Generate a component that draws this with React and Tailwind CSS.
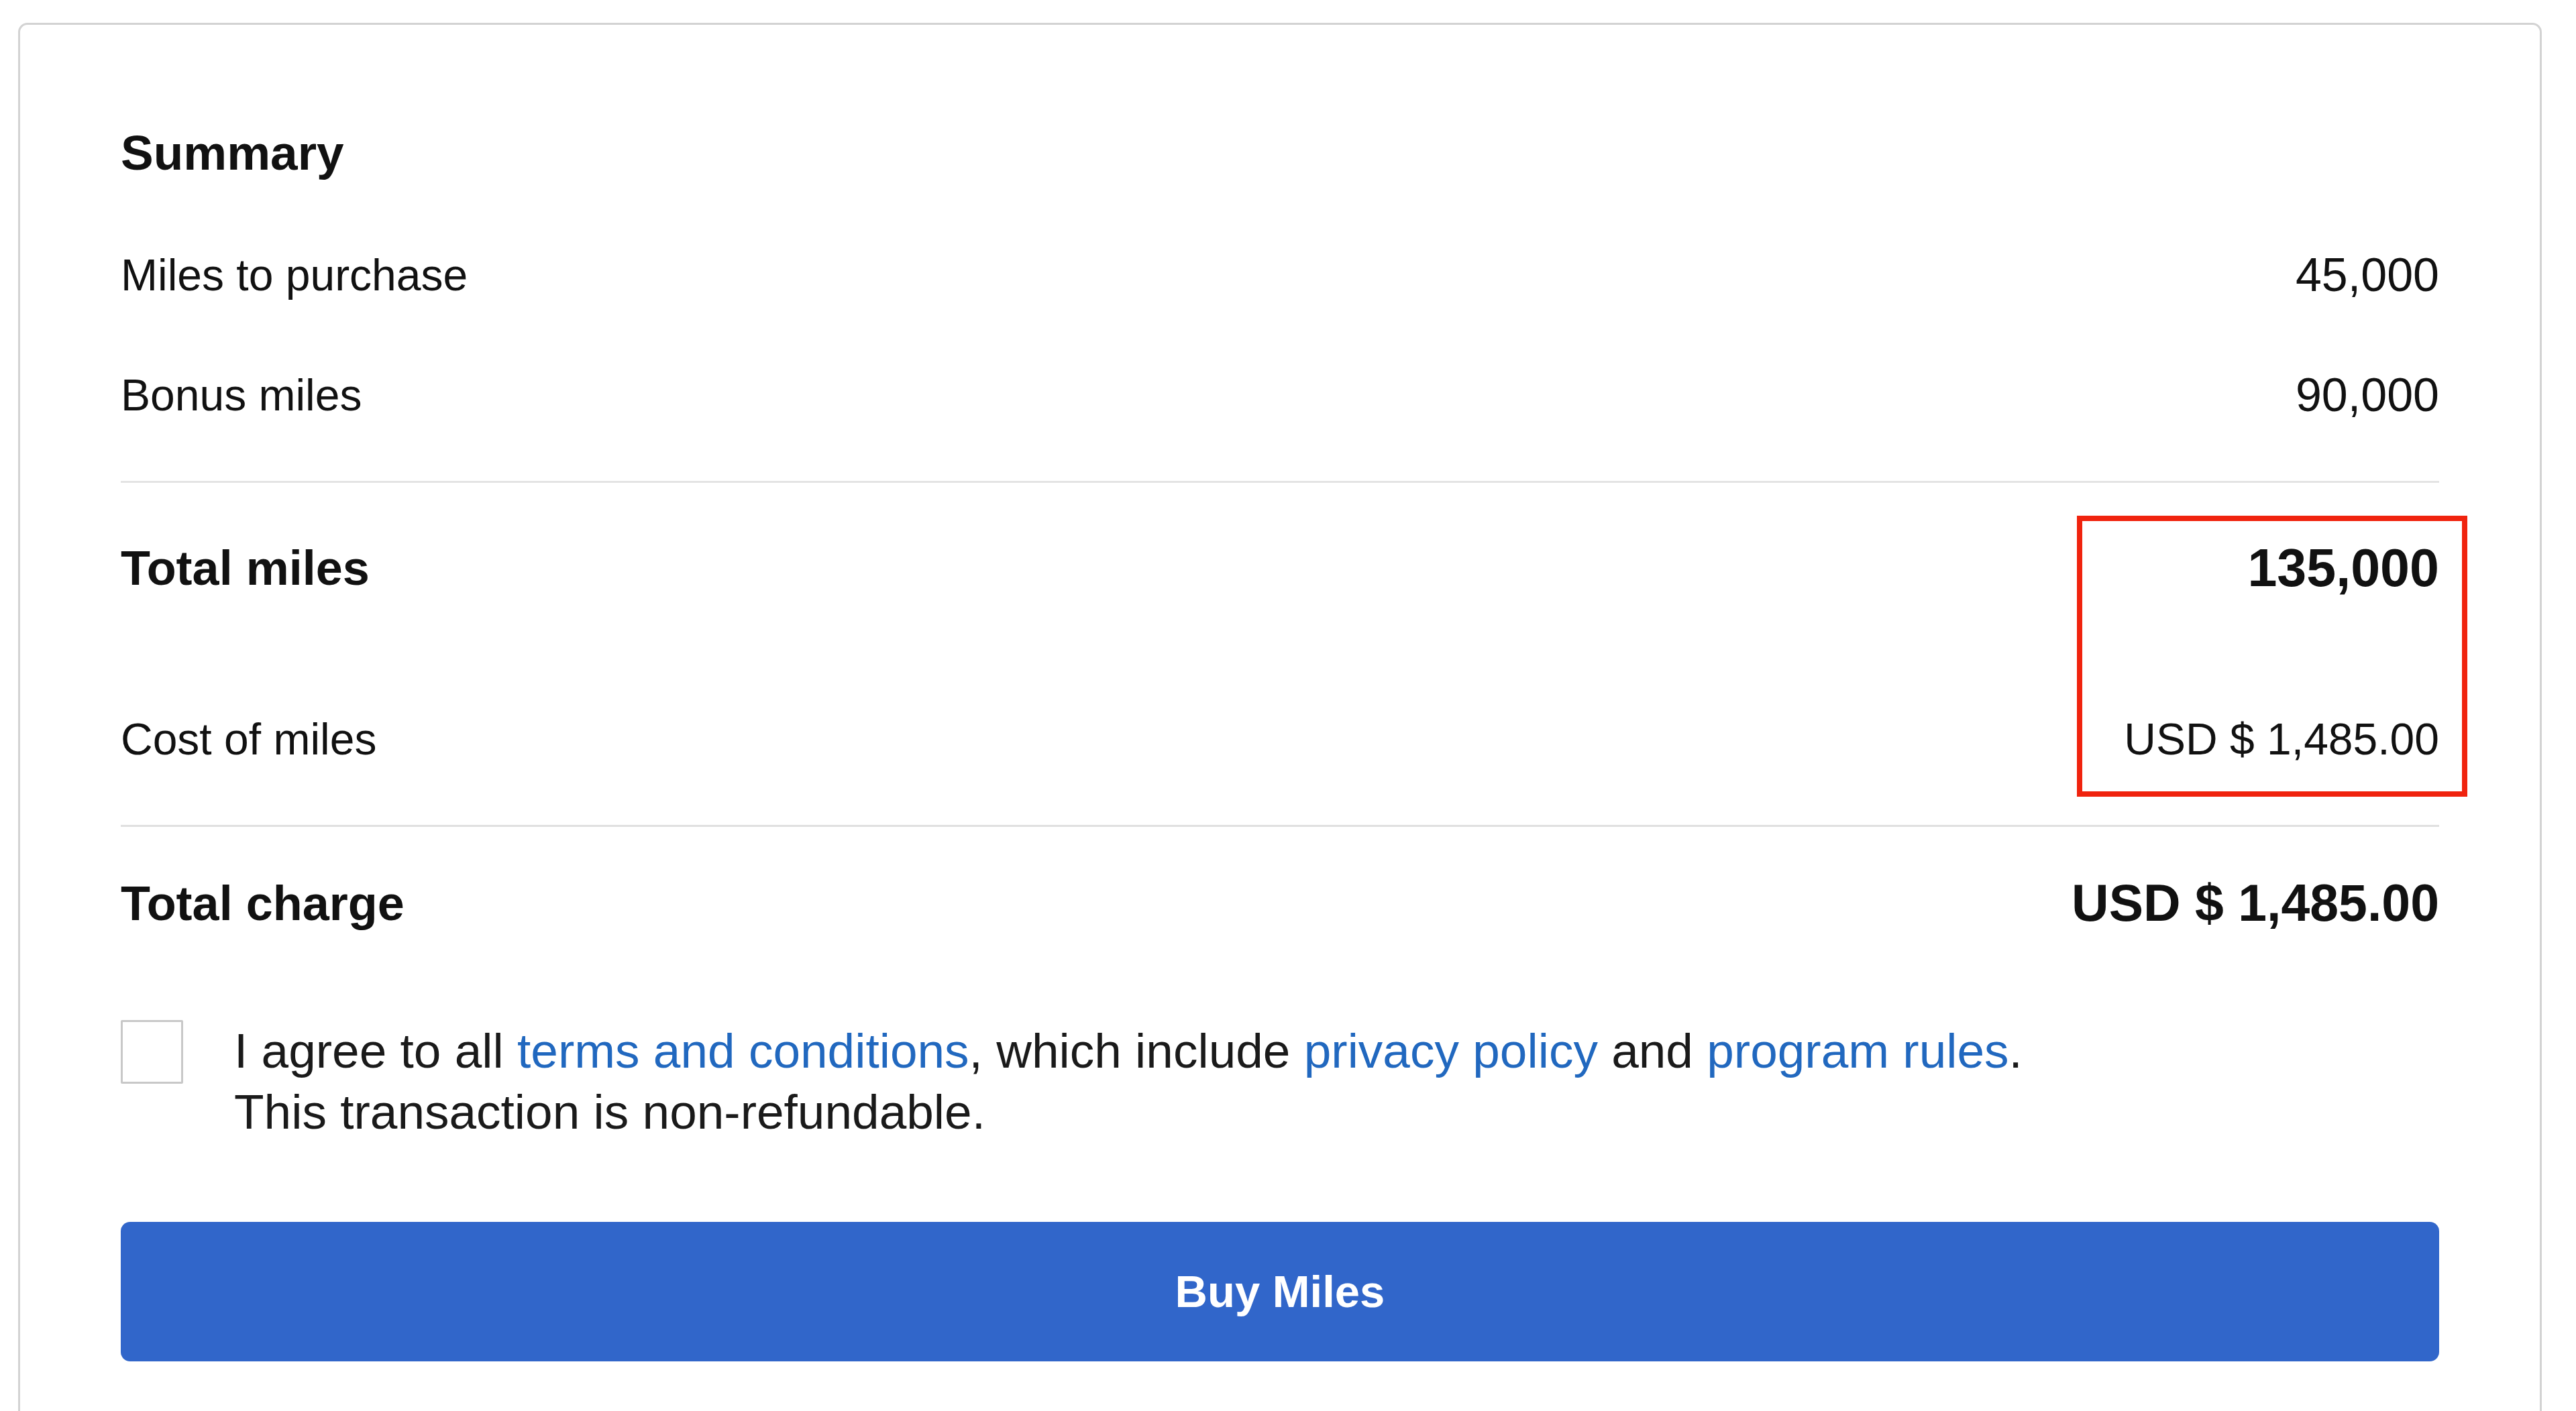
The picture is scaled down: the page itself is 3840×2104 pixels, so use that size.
import React from 'react';

const font = { fontFamily: '"Liberation Sans", Arial, sans-serif' };

function Row({ label, value, bold, height, valueSize }) {
  return (
    <div className={`flex items-center justify-between ${height}`}>
      <span className={bold ? 'text-[72px] font-bold' : 'text-[66px]'}>{label}</span>
      <span className={`${valueSize} ${bold ? 'font-bold' : ''}`}>{value}</span>
    </div>
  );
}

function App() {
  return (
    <div className="min-h-screen bg-white pt-[34px] pl-[27px] text-[#111]" style={font}>
      <div className="w-[3762px] min-h-[2200px] rounded-[14px] border-[3px] border-[#d3d3d3] px-[150px] pt-[131px]">
        <h2 className="flex h-[120px] items-center text-[73px] font-bold">Summary</h2>

        <div className="mt-[33px]">
          <Row label="Miles to purchase" value="45,000" height="h-[179px]" valueSize="text-[70px]" />
          <Row label="Bonus miles" value="90,000" height="h-[179px]" valueSize="text-[70px]" />
        </div>

        <div className="mt-[38px] h-[3px] bg-[#e4e4e4]" />

        {/* highlighted values */}
        <div className="relative">
          <Row label="Total miles" value="135,000" bold height="h-[254px]" valueSize="text-[79px]" />
          <Row label="Cost of miles" value="USD $ 1,485.00" height="h-[256px]" valueSize="text-[66px]" />
          <div className="absolute right-[-42px] top-[49px] h-[419px] w-[582px] border-[8px] border-[#f0230e]" />
        </div>

        <div className="h-[3px] bg-[#e0e0e0]" />

        <Row label="Total charge" value="USD $ 1,485.00" bold height="h-[228px]" valueSize="text-[77px]" />

        <div className="mt-[60px] flex items-start gap-[76px]">
          <input
            type="checkbox"
            className="mt-0 h-[95px] w-[93px] shrink-0 appearance-none rounded-[2px] border-[3px] border-[#c8c8c8] bg-white"
          />
          <p className="text-[73px] leading-[91px] text-[#1a1a1a]">
            I agree to all <a className="text-[#2168bf]">terms and conditions</a>, which include{' '}
            <a className="text-[#2168bf]">privacy policy</a> and <a className="text-[#2168bf]">program rules</a>.
            <br />
            This transaction is non-refundable.
          </p>
        </div>

        <button className="mt-[119px] flex h-[208px] w-full items-center justify-center rounded-[14px] bg-[#3166ca] text-[67px] font-bold text-white">
          Buy Miles
        </button>
      </div>
    </div>
  );
}

export default App;
